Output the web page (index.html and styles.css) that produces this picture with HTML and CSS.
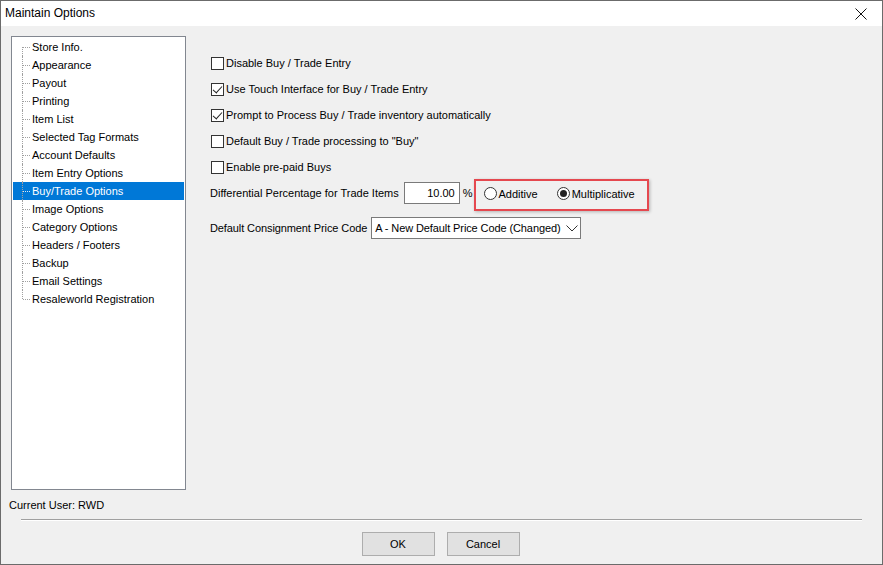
FILE: index.html
```html
<!DOCTYPE html>
<html>
<head>
<meta charset="utf-8">
<title>Maintain Options</title>
<link rel="stylesheet" href="styles.css">
</head>
<body>
<div class="window">
  <div class="titlebar">
    <span class="title">Maintain Options</span>
    <span class="close">
      <svg width="12" height="12" viewBox="0 0 12 12"><path d="M0.5 0.5 L11.5 11.5 M11.5 0.5 L0.5 11.5" stroke="#111" stroke-width="1" fill="none"/></svg>
    </span>
  </div>
  <div class="body">
    <div class="main">
      <div class="side">
        <ul class="tree">
          <li>Store Info.</li>
          <li>Appearance</li>
          <li>Payout</li>
          <li>Printing</li>
          <li>Item List</li>
          <li>Selected Tag Formats</li>
          <li>Account Defaults</li>
          <li>Item Entry Options</li>
          <li class="selected">Buy/Trade Options</li>
          <li>Image Options</li>
          <li>Category Options</li>
          <li>Headers / Footers</li>
          <li>Backup</li>
          <li>Email Settings</li>
          <li class="last">Resaleworld Registration</li>
        </ul>
        <div class="user">Current User: RWD</div>
      </div>
      <div class="content">
        <label class="check"><span class="box"></span>Disable Buy / Trade Entry</label>
        <label class="check"><span class="box on"></span>Use Touch Interface for Buy / Trade Entry</label>
        <label class="check"><span class="box on"></span>Prompt to Process Buy / Trade inventory automatically</label>
        <label class="check"><span class="box"></span>Default Buy / Trade processing to "Buy"</label>
        <label class="check"><span class="box"></span>Enable pre-paid Buys</label>
        <div class="field diff">
          <span>Differential Percentage for Trade Items</span>
          <span class="input">10.00</span>
          <span class="pct">%</span>
          <span class="marked">
            <span class="radio"></span><span class="rlabel">Additive</span>
            <span class="radio on"></span><span class="rlabel">Multiplicative</span>
          </span>
        </div>
        <div class="field consign">
          <span class="clabel">Default Consignment Price Code</span>
          <span class="combo">
            <span class="ctext">A - New Default Price Code (Changed)</span>
            <svg class="chev" width="12" height="7" viewBox="0 0 12 7"><path d="M0.5 0.5 L6 6 L11.5 0.5" stroke="#333" stroke-width="1" fill="none"/></svg>
          </span>
        </div>
      </div>
    </div>
    <div class="sep"></div>
    <div class="buttons">
      <span class="btn">OK</span>
      <span class="btn">Cancel</span>
    </div>
  </div>
</div>
</body>
</html>
```
FILE: styles.css
```css
* { box-sizing: border-box; }
html, body { margin: 0; padding: 0; background: #f0f0f0; }
body {
  font-family: "Liberation Sans", Arial, sans-serif;
  font-size: 11px;
  color: #000;
}
.window {
  width: 883px;
  height: 565px;
  border: 1px solid #6b6b6b;
  display: flex;
  flex-direction: column;
  background: #f0f0f0;
}
.titlebar {
  height: 25px;
  background: #fff;
  display: flex;
  align-items: center;
  justify-content: space-between;
  padding: 0 15px 0 4px;
  flex: none;
}
.title { font-size: 12px; margin-top: -1px; }
.close { display: flex; width: 12px; height: 12px; margin-top: 1px; }
.body { flex: 1; display: flex; flex-direction: column; }
.main { display: flex; padding: 10px 0 0 10px; }
.side { width: 175px; flex: none; }
.tree {
  list-style: none;
  margin: 0;
  padding: 1px 1px;
  height: 454px;
  background: #fff;
  border: 1px solid #828790;
  position: relative;
}
.tree li {
  height: 18px;
  line-height: 18px;
  padding-left: 19px;
  position: relative;
  white-space: nowrap;
}
.tree li::before {
  content: "";
  position: absolute;
  left: 9px;
  top: 0;
  height: 18px;
  border-left: 1px dotted #a0a0a0;
}
.tree li:first-child::before { top: 9px; height: 9px; }
.tree li.last::before { height: 9px; }
.tree li::after {
  content: "";
  position: absolute;
  left: 10px;
  top: 9px;
  width: 7px;
  border-top: 1px dotted #a0a0a0;
}
.tree li.selected { background: #0078d7; color: #fff; }
.tree li.selected::after { border-top-color: #d8e8f8; }
.user { margin: 8px 0 0 -2px; height: 15px; line-height: 15px; }
.content { margin-left: 24px; padding-top: 14px; }
.check {
  display: flex;
  align-items: center;
  height: 26px;
  white-space: nowrap;
}
.box {
  width: 13px;
  height: 13px;
  border: 1px solid #333;
  background: #fff;
  margin: 0 2px 0 1px;
  position: relative;
  flex: none;
}
.box.on::after {
  content: "";
  position: absolute;
  left: 3px;
  top: 0px;
  width: 4px;
  height: 8px;
  border-right: 1px solid #222;
  border-bottom: 1px solid #222;
  transform: rotate(42deg);
}
.field { display: flex; align-items: center; white-space: nowrap; }
.diff { height: 32px; margin-top: -3px; }
.input {
  width: 56px;
  height: 22px;
  border: 1px solid #7a7a7a;
  background: #fff;
  text-align: right;
  line-height: 20px;
  padding-right: 4px;
  margin-left: 5px;
}
.pct { margin-left: 3px; }
.marked {
  display: flex;
  align-items: center;
  height: 32px;
  border: 2px solid #e5484f;
  box-shadow: 1px 1px 3px rgba(0,0,0,0.25);
  margin-left: 1px;
  padding: 0 12px 3px 8px;
  margin-top: 4px;
}
.radio {
  width: 13px;
  height: 13px;
  border: 1px solid #333;
  border-radius: 50%;
  background: #fff;
  position: relative;
  flex: none;
}
.radio.on::after {
  content: "";
  position: absolute;
  left: 2px;
  top: 2px;
  width: 7px;
  height: 7px;
  border-radius: 50%;
  background: #222;
}
.rlabel { margin-left: 2px; margin-right: 19px; }
.rlabel:last-child { margin-right: 0; }
.consign { margin-top: 8px; height: 22px; }
.clabel { letter-spacing: -0.1px; }
.combo {
  margin-left: 4px;
  width: 210px;
  height: 22px;
  border: 1px solid #7a7a7a;
  background: #fff;
  display: flex;
  align-items: center;
  padding: 0 2px 0 3px;
}
.ctext { flex: 1; overflow: hidden; letter-spacing: -0.1px; }
.chev { margin: 1px 0 0 4px; flex: none; }
.sep {
  margin: 6px 20px 0 20px;
  border-top: 1px solid #a0a0a0;
  border-bottom: 1px solid #fff;
}
.buttons {
  display: flex;
  justify-content: center;
  gap: 12px;
  margin-top: 11px;
  padding-right: 2px;
}
.btn {
  width: 73px;
  height: 24px;
  line-height: 22px;
  text-align: center;
  background: #e1e1e1;
  border: 1px solid #adadad;
}
```
